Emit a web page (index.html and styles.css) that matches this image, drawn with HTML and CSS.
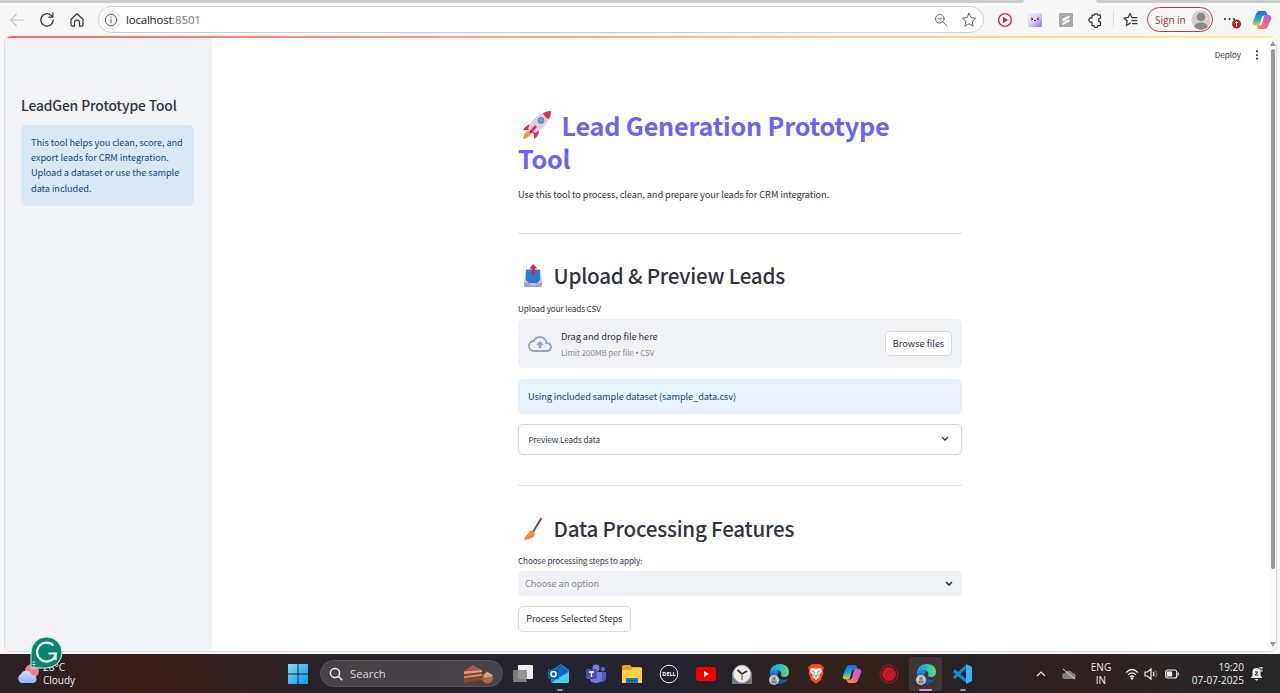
FILE: index.html
```html
<!DOCTYPE html>
<html lang="en">
<head>
<meta charset="utf-8">
<title>LeadGen Prototype Tool</title>
<link rel="stylesheet" href="styles.css">
</head>
<body>
<svg class="defs" width="0" height="0" aria-hidden="true">
  <defs>
    <linearGradient id="edgeTop" x1="0" y1="0" x2="1" y2="0"><stop offset="0" stop-color="#1b9de2"/><stop offset=".55" stop-color="#28bfc9"/><stop offset="1" stop-color="#68dd60"/></linearGradient>
    <linearGradient id="edgeLow" x1="0" y1="0" x2="0" y2="1"><stop offset="0" stop-color="#1e8bdc"/><stop offset="1" stop-color="#0c4e9d"/></linearGradient>
    <linearGradient id="copA" x1="0" y1="0" x2="0" y2="1"><stop offset="0" stop-color="#1769e0"/><stop offset=".5" stop-color="#19a9cf"/><stop offset="1" stop-color="#e2cf35"/></linearGradient>
    <linearGradient id="copB" x1="1" y1="0" x2="0" y2="1"><stop offset="0" stop-color="#a95cf0"/><stop offset=".5" stop-color="#ef5f9b"/><stop offset="1" stop-color="#ff8a3a"/></linearGradient>
    <linearGradient id="win" x1="0" y1="0" x2="1" y2="1"><stop offset="0" stop-color="#84dcff"/><stop offset="1" stop-color="#0b94f0"/></linearGradient>
    <linearGradient id="cloudFill" x1="0" y1="0" x2="0" y2="1"><stop offset="0" stop-color="#cfe0ff"/><stop offset="1" stop-color="#8fb2f3"/></linearGradient>
    <linearGradient id="catFill" x1="0" y1="0" x2="1" y2="1"><stop offset="0" stop-color="#f4f0fc"/><stop offset=".5" stop-color="#d9cdf6"/><stop offset="1" stop-color="#9a70e4"/></linearGradient>
    <symbol id="edge" viewBox="0 0 22 22">
      <path d="M2 12C1 4 7 1 12 1c6 0 9 4 9 8 0 3-2 5-5 5-2 0-3-1-3-2 1-1 0-5-4-5-3 0-6 2-7 5z" fill="url(#edgeTop)"/>
      <path d="M2 12c0-3 3-5 6-5 2 0 3 1 3 2-3 2-2 8 5 8 2 0 3-1 4-1-2 3-5 5-9 5-5 0-9-4-9-9z" fill="url(#edgeLow)"/>
      <circle cx="6" cy="17" r="5" fill="#c9c9c9"/><circle cx="6" cy="15.5" r="1.8" fill="#85807e"/><path d="M3 19.6c0-3 6-3 6 0-1.500 1.600-4.500 1.600-6 0z" fill="#85807e"/>
    </symbol>
    <symbol id="copilot" viewBox="0 0 20 20">
      <path d="M4.500 3Q5.300 1 7.300 1h5.200c1.300 0 1.900.8 2.300 2l.7 2.500h-3c-1.600 0-2.300.8-2.700 2.100l-1.700 5.900c-.5 1.500-1.500 2.200-3 2.200C1.200 15.700.3 13.800 1 11.500z" fill="url(#copA)"/>
      <path d="M15.500 17q-.8 2-2.800 2H7.500c-1.300 0-1.900-.8-2.300-2l-.5-1.500h2.700c1.600 0 2.300-.8 2.700-2.100l1.700-6.400c.5-1.500 1.500-2.200 3-2.200 3.900 0 5.100 1.800 4.400 4.200z" fill="url(#copB)"/>
    </symbol>
  </defs>
</svg>

<div class="screen">
  <header class="toolbar">
    <div class="tabline"><span class="active-tab"></span></div>
    <nav class="nav-buttons">
      <svg class="ico back" width="16" height="16" viewBox="0 0 16 16"><path d="M15 8H1.500M7.500 2 1.500 8l6 6"/></svg>
      <svg class="ico" width="16" height="16" viewBox="0 0 16 16"><path d="M14.200 8A6.200 6.200 0 1 1 12 3.200l1.600 1.500M13.900 1v4H9.900"/></svg>
      <svg class="ico" width="16" height="16" viewBox="0 0 16 16"><path d="M2 7.200 8 1.800l6 5.400v5.600q0 1.200-1.200 1.200H10.500V10.500a2.500 2.500 0 0 0-5 0V14H3.200Q2 14 2 12.800z"/></svg>
    </nav>
    <div class="address">
      <span class="site-info"><svg class="ico thin" width="14" height="14" viewBox="0 0 14 14"><circle cx="7" cy="7" r="5.700"/><path d="M7 6.300v3.500M7 4v.5"/></svg></span>
      <span class="url">localhost<i>:8501</i></span>
      <svg class="ico thin zoom-icon" width="14" height="14" viewBox="0 0 14 14"><circle cx="5.800" cy="5.800" r="4.300"/><path d="m9 9 4 4M3.800 5.800h4"/></svg>
      <svg class="ico thin" width="16" height="16" viewBox="0 0 16 16"><path d="m8 1.300 2 4.300 4.700.6-3.500 3.200.9 4.700L8 11.800l-4.100 2.300.9-4.700L1.300 6.200 6 5.600z"/></svg>
    </div>
    <div class="extensions">
      <svg width="16" height="16" viewBox="0 0 16 16"><circle cx="8" cy="8" r="6.400" fill="none" stroke="#c8264e" stroke-width="1.400"/><path d="M6 4.800 11 8l-5 3.200z" fill="#c8264e"/></svg>
      <svg width="14" height="14" viewBox="0 0 14 14"><rect width="14" height="14" rx="1" fill="url(#catFill)"/><path d="m3 4.500 2 1.500-2 1M11 4.500 9 6l2 1M6 7.500h2" fill="none" stroke="#423858"/></svg>
      <svg width="14" height="14" viewBox="0 0 14 14"><rect width="14" height="14" rx="1" fill="#a9a9a9"/><path d="M10.500 2.500v2.300L6 7.200l4.500-.7v2.200l-7 3.300V9.700l4.300-2.200-4.300.5V5.600z" fill="#fff"/></svg>
      <svg class="ico dark" width="16" height="16" viewBox="0 0 16 16"><path d="M4 3h2.200a2 2 0 0 1 3.800 0h2.500v3a2 2 0 1 0 0 4v3.500H10a2 2 0 0 1-4 0H4V10a2.200 2.200 0 1 1 0-4z"/></svg>
      <span class="divider"></span>
      <svg class="ico dark" width="16" height="16" viewBox="0 0 16 16"><path d="M8.500 11 4.300 13.500l.9-4.500L2 6l4.200-.6L8 1.500 9.900 5.500H15M10 8.500h5M10.500 11.500H15"/></svg>
    </div>
    <div class="signin"><span>Sign in</span><svg width="20" height="20" viewBox="0 0 20 20"><circle cx="10" cy="10" r="9.700" fill="#d2d0ce"/><circle cx="10" cy="7" r="4.300" fill="#8b8988"/><path d="M3.500 17c0-6 13-6 13 0-3.500 3.500-9.500 3.500-13 0z" fill="#8b8988"/></svg></div>
    <svg class="more" width="20" height="18" viewBox="0 0 20 18"><g fill="#333"><circle cx="3" cy="6" r="1.100"/><circle cx="7.500" cy="6" r="1.100"/><circle cx="12" cy="6" r="1.100"/></g><circle cx="14.500" cy="11" r="4.500" fill="#b9221f"/><path d="M14.500 13.500V9m-1.700 1.300 1.700-1.600 1.700 1.600" stroke="#fff" fill="none"/></svg>
    <svg class="cop" width="20" height="20"><use href="#copilot"/></svg>
  </header>

  <div class="viewport">
    <div class="rainbow"></div>
    <aside class="sidebar">
      <h2>LeadGen Prototype Tool</h2>
      <div class="note"><span>This tool helps you clean, score, and</span><br><span>export leads for CRM integration.</span><br><span>Upload a dataset or use the sample</span><br><span>data included.</span></div>
    </aside>
    <main class="main">
      <div class="app-menu"><span>Deploy</span><svg width="4" height="10" viewBox="0 0 4 10"><g fill="#31333f"><circle cx="2" cy="1.300" r="1.100"/><circle cx="2" cy="5" r="1.100"/><circle cx="2" cy="8.700" r="1.100"/></g></svg></div>
      <div class="content">
        <h1><svg class="rocket" width="30" height="28" viewBox="0 0 30 28"><path d="m9 13q-5 1-8 6l6 0 5 4 0 5q5-3 5-9z" fill="#e22b59"/><path d="M7 20q-5 0-6 8 7-1 8-6z" fill="#f69939"/><path d="M6 18Q10 4 28 0q1 13-15 22z" fill="#d9cfdd"/><path d="M21 2q4-2 8-2 0 5-2 8-4-1-6-6z" fill="#e32c4c"/><path d="m14 15-6 7" stroke="#dc214f" stroke-width="2.500"/><circle cx="19" cy="9.500" r="3" fill="#56a3e8" stroke="#7b80a8"/></svg><span>Lead Generation Prototype</span><br><span>Tool</span></h1>
        <p class="intro"><span>Use this tool to process, clean, and prepare your leads for CRM integration.</span></p>
        <hr>
        <h2 class="upload-title"><svg width="20" height="24" viewBox="0 0 20 24"><path d="M3 5h14l2 13v3q0 2-2 2H3q-2 0-2-2v-3z" fill="#c8bddb"/><path d="M3 6h14v10l-3 3H6l-3-3z" fill="#247fd0"/><path d="M1 19h5l1.500 2h5L14 19h5v2q0 2-2 2H3q-2 0-2-2z" fill="#aa9fc4"/><path d="m10.300 0 4 4.500H12V11H8.500V4.500H6.300z" fill="#d02552"/></svg><span>Upload &amp; Preview Leads</span></h2>
        <label class="upload-label"><span>Upload your leads CSV</span></label>
        <section class="dropzone">
          <svg width="24" height="24" viewBox="0 0 24 24"><path d="M19.350 10.040A7.490 7.490 0 0 0 12 4C9.110 4 6.600 5.640 5.350 8.040A5.994 5.994 0 0 0 0 14c0 3.310 2.690 6 6 6h13c2.760 0 5-2.240 5-5 0-2.640-2.050-4.780-4.650-4.960zM19 18H6a4 4 0 0 1-.57-7.960l1.070-.11.500-.95A5.470 5.470 0 0 1 12 6c2.620 0 4.880 1.860 5.390 4.430l.3 1.500 1.530.11A2.960 2.960 0 0 1 22 15c0 1.650-1.350 3-3 3zm-11-5h2.550v3h2.900v-3H16l-4-4z" fill="#98a4c5"/></svg>
          <div class="drop-copy"><b><span>Drag and drop file here</span></b><small><span>Limit 200MB per file <i>•</i> CSV</span></small></div>
          <button class="button browse"><span>Browse files</span></button>
        </section>
        <div class="info"><span>Using included sample dataset (sample_data.csv)</span></div>
        <div class="expander"><span>Preview Leads data</span><svg class="chev" width="8" height="6" viewBox="0 0 8 6"><path d="m1 1 3 3 3-3"/></svg></div>
        <hr class="second">
        <h2 class="process-title"><svg width="20" height="24" viewBox="0 0 20 24"><path d="M18.500 1 10 15" stroke="#77485a" stroke-width="2"/><path d="m8 13 4 3q0 6-11 7 1-4 3-5z" fill="#f58a47"/><path d="m4 18 3 3m0-5 3 4" stroke="#e87440"/></svg><span>Data Processing Features</span></h2>
        <label class="steps-label"><span>Choose processing steps to apply:</span></label>
        <div class="select"><span>Choose an option</span><svg class="chev heavy" width="8" height="6" viewBox="0 0 8 6"><path d="m1 1 3 3 3-3"/></svg></div>
        <button class="button process"><span>Process Selected Steps</span></button>
      </div>
    </main>
    <div class="scrollbar"><i class="up"></i><i class="thumb"></i><i class="down"></i></div>
  </div>

  <footer class="taskbar">
    <div class="weather"><svg width="24" height="22" viewBox="0 0 24 22"><circle cx="16" cy="8" r="7" fill="#ee7c89"/><path d="M5 20a5 5 0 0 1 0-9 6 6 0 0 1 11 1 4 4 0 0 1 1 8z" fill="url(#cloudFill)"/></svg><div><span>28°C</span><span>Cloudy</span></div></div>
    <svg class="windows" width="20" height="20" viewBox="0 0 20 20"><path d="M0 0h9.500v9.500H0zM10.500 0H20v9.500h-9.500zM0 10.500h9.500V20H0zM10.500 10.500H20V20h-9.500z" fill="url(#win)"/></svg>
    <div class="search"><svg width="14" height="14" viewBox="0 0 14 14"><g fill="none" stroke="#eee" stroke-width="1.500"><circle cx="6" cy="6" r="4.600"/><path d="m9.300 9.300 4 4"/></g></svg><span>Search</span><svg class="cake" width="32" height="20" viewBox="0 0 32 20"><path d="m1 7 18-1v10L1 19z" fill="#8a4630"/><path d="m1 7 9-6 9 5z" fill="#a45b3e"/><path d="m1 7.500 18-1.500v2L1 10zm0 5 18-2.500v1.500L1 14z" fill="#dba184"/><circle cx="24.500" cy="14" r="5.500" fill="#ad6745"/><path d="m20 12 4-4.500 6 4-3 2-2-1-2 2z" fill="#d3a17b"/></svg></div>
    <div class="apps">
      <span><svg width="20" height="18" viewBox="0 0 20 18"><rect x="5" width="15" height="14" rx="1" fill="#eee"/><path d="M0 5h14v12H0z" fill="#8a8a8a" opacity=".88"/></svg></span>
      <span class="running"><svg width="22" height="20" viewBox="0 0 22 20"><path d="m3 6 10-6 8 6v11q0 2-2 2H5q-2 0-2-2z" fill="#1684d6"/><path d="m5 5 8-4 7 6-8 5z" fill="#1168b8"/><path d="m4 18 17-10v9q0 2-2 2H5z" fill="#48d0f5"/><rect y="5" width="11" height="10" rx="1" fill="#0b5cab"/><circle cx="5.500" cy="10" r="2.600" fill="none" stroke="#fff" stroke-width="1.500"/></svg></span>
      <span><svg width="22" height="20" viewBox="0 0 22 20"><circle cx="11" cy="4" r="3.500" fill="#7c80e3"/><circle cx="18" cy="5" r="2.300" fill="#5059c9"/><path d="M13 8h8v5q0 5-5 5h-3z" fill="#5059c9"/><path d="M5 8h12v6q0 5-6 5t-6-5z" fill="#7479dc"/><rect x="1" y="5" width="11" height="10" rx="1" fill="#4850ae"/><path d="M4 8h5M6.500 8v5" stroke="#fff" stroke-width="1.300"/></svg></span>
      <span><svg width="20" height="18" viewBox="0 0 20 18"><path d="M0 2q0-2 2-2h6l2 2h9l1 2v14H0z" fill="#e3a51c"/><path d="M0 5h9l2-2h9v15H0z" fill="#ffcf48"/><path d="M4 18v-5h12v5z" fill="#177ac1"/><path d="M6 15.500h8" stroke="#075086"/></svg></span>
      <span><svg width="20" height="20" viewBox="0 0 20 20"><circle cx="10" cy="10" r="8.800" fill="none" stroke="#eee"/><text x="10" y="12" text-anchor="middle" class="dell">DELL</text></svg></span>
      <span><svg width="20" height="14" viewBox="0 0 20 14"><rect width="20" height="14" rx="3" fill="#f20000"/><path d="m8 4 5 3-5 3z" fill="#fff"/></svg></span>
      <span><svg width="20" height="20" viewBox="0 0 20 20"><path d="M0 8h20v12H0z" fill="#6d777d"/><circle cx="10" cy="10" r="8.800" fill="#e8eaeb" stroke="#a5abae"/><path d="m5.500 6 4.500 4 5-3" fill="none" stroke="#333" stroke-width="1.800"/><path d="M10 10v6" stroke="#d6672d" stroke-width="1.600"/></svg></span>
      <span><svg width="22" height="22"><use href="#edge"/></svg></span>
      <span><svg width="18" height="20" viewBox="0 0 18 20"><path d="m5 0h8l2 2 2 1-1 3 .5 3L14 16l-5 4-5-4L1.500 9 2 6 1 3l2-1z" fill="#f24a22"/><path d="m4 4 3 .5h4l3-.5 1 4-3 3 .5 2L9 16l-3.500-3 .5-2-3-3z" fill="#fff"/><path d="m5 7 2.500 1-.8 2.500 1.300 1h2l1.300-1L10.500 8 13 7M9 12v2" fill="none" stroke="#f24a22" stroke-width=".8"/></svg></span>
      <span><svg width="20" height="20"><use href="#copilot"/></svg></span>
      <span><svg width="20" height="20" viewBox="0 0 20 20"><circle cx="10" cy="10" r="9" fill="none" stroke="#a91d26"/><circle cx="10" cy="10" r="7" fill="#c91422"/></svg></span>
      <span class="current"><svg width="22" height="22"><use href="#edge"/></svg></span>
      <span class="running"><svg width="20" height="20" viewBox="0 0 20 20"><path d="M14 2.500 2 14M2 6.500 14 17" stroke="#168bd2" stroke-width="3"/><path d="m14 0 6 3v14l-6 3z" fill="#35b5f4"/></svg></span>
    </div>
    <div class="tray">
      <svg class="caret" width="10" height="6" viewBox="0 0 10 6"><path d="m1 5 4-4 4 4"/></svg>
      <svg class="cloud" width="14" height="12" viewBox="0 0 14 12"><path d="M3 11a3 3 0 0 1 0-6 4 4 0 0 1 7.500 0A3 3 0 0 1 11 11z" fill="#858181"/><path d="m1 1 12 10" stroke="#ddd"/></svg>
      <div class="lang"><span>ENG</span><span>IN</span></div>
      <svg class="wifi" width="14" height="12" viewBox="0 0 14 12"><path d="M1 4.500q6-6 12 0M3 6.800q4-4 8 0M5 9q2-2 4 0"/><circle cx="7" cy="10.500" r="1.200" fill="#eee" stroke="none"/></svg>
      <svg class="sound" width="14" height="12" viewBox="0 0 14 12"><path d="M1 4h2.500L7 1v10L3.500 8H1z"/><path d="M9 4q2 2 0 4"/><path d="M11 2.500q3.500 3.500 0 7" opacity=".35"/></svg>
      <svg class="battery" width="14" height="10" viewBox="0 0 14 10"><rect x=".7" y="1" width="11" height="8" rx="2"/><path d="M2.500 3h4v4h-4z" fill="#eee"/><path d="M13.200 3.500v3"/></svg>
      <div class="clock"><span>19:20</span><span>07-07-2025</span></div>
      <svg class="bell" width="14" height="14" viewBox="0 0 14 14"><path d="M1 11 2.500 8V5a4 4 0 0 1 8 0v3l1.500 3zM4.500 12h4l-2 1.700z" fill="#eee"/><path d="M5 5h3L5 8h3" fill="none" stroke="#282626"/><path d="M9 .700h3.500L9.500 4h3.500" fill="none" stroke="#eee"/></svg>
    </div>
  </footer>
  <svg class="grammarly" width="34" height="34" viewBox="0 0 34 34"><path d="M1 32V16.500A15.500 15.500 0 1 1 16.500 32z" fill="#07866e" stroke="#e1eee9"/><path d="M23.500 9.500A9.500 9.500 0 1 0 26 17.500h-7.500M25.500 17.500v6.500" fill="none" stroke="#fff" stroke-width="2.200"/><path d="M2.500 26h3m-3 2.500h3m-3 2.500h3" stroke="#d6eee7"/></svg>
</div>
</body>
</html>
```
FILE: styles.css
```css
*{box-sizing:border-box}
body{margin:0;overflow:hidden;color:#31333f;font-family:"Noto Sans CJK SC",sans-serif}
.defs{position:absolute}
svg{flex:none;display:block}
span{white-space:nowrap}
.screen{position:relative;width:1280px;height:693px;display:flex;flex-direction:column;background:#f7f7f7}
.toolbar{position:relative;height:36px;flex:none;display:flex;align-items:center;padding-top:3px;font-family:"Noto Sans",sans-serif}
.tabline{position:absolute;top:0;left:0;width:100%;height:3px;background:#ccc}
.active-tab{display:block;width:74px;height:3px;margin-left:1023px;background:#f7f7f7;border-radius:4px 4px 0 0}
.nav-buttons{display:flex;gap:14px;padding-left:9px;width:98px}
.ico{fill:none;stroke:#333;stroke-width:1.25;stroke-linecap:round;stroke-linejoin:round}
.ico.back{stroke:#ccc}
.ico.thin{stroke:#666;stroke-width:1}
.address{width:886px;height:27px;border:1px solid #cecece;border-radius:14px;background:#fff;display:flex;align-items:center;padding:0 6px 0 2px}
.site-info{width:20px;height:20px;border-radius:50%;background:#f5f5f5;display:flex;align-items:center;justify-content:center}
.url{font:11.6px "Open Sans",sans-serif;letter-spacing:-.25px;color:#222;margin-left:5px;flex:1}
.url i{font-style:normal;color:#777}
.zoom-icon{margin-right:13px}
.extensions{display:flex;align-items:center;margin-left:13px;width:150px}
.extensions>:nth-child(2){margin-left:15px}
.extensions>:nth-child(3){margin-left:17px}
.extensions>:nth-child(4){margin-left:15px}
.extensions>:nth-child(5){margin-left:9px}
.extensions>:nth-child(6){margin-left:8px}
.divider{width:1px;height:17px;background:#ddd}
.signin{width:66px;height:25px;border:1px solid #b33b46;border-radius:13px;display:flex;align-items:center;justify-content:space-between;padding:0 1px 0 7px;color:#a4343f;font:10.2px "Open Sans",sans-serif;letter-spacing:-.1px}
.more{margin:5px 0 0 9px}
.cop{margin-left:10px}
.viewport{position:relative;flex:none;width:1273px;height:616px;margin-left:4px;border:1px solid #ddd;border-top:0;border-radius:7px;overflow:hidden;display:flex;background:#fff}
.rainbow{position:absolute;left:0;top:0;width:100%;height:2px;background:linear-gradient(90deg,#ee6a65,#ff9c82 35%,#ffc98a 62%,#fff08a)}
.sidebar{width:207px;background:#f0f2f6;padding:59px 18px 0 16px}
.sidebar h2{font-size:13.8px;letter-spacing:-.1px;line-height:20px;font-weight:500;margin:0 0 10px}
.note{height:81px;background:#dae7f5;border-radius:5px;padding:9.5px 10px 0;color:#124a82;font-size:9.2px;letter-spacing:-.06px;line-height:15.4px}
.main{position:relative;flex:1}
.app-menu{position:absolute;right:10px;top:13px;display:flex;align-items:center;gap:14px;font-size:8.1px;letter-spacing:-.05px;line-height:12px}
.content{width:444px;margin-left:306px;padding-top:73px}
h1,.content h2{margin:0;display:block}
h1{height:66px;font-size:25.2px;letter-spacing:-.2px;line-height:33px;font-weight:700;color:#6c63f0}
h1 svg{display:inline-block;margin:0 10px 0 3.5px;vertical-align:-3px}
.intro{font-size:9.25px;letter-spacing:-.1px;line-height:16px;margin:11px 0 31px}
hr{margin:0;height:1px;border:0;background:#e3e3e6}
.content h2{display:flex;align-items:center;gap:10.5px;padding-left:5px;font-size:20.6px;letter-spacing:-.22px;font-weight:500;line-height:28px}
.content .upload-title{padding-top:27px}
.content .process-title{padding-top:28px}
.upload-title svg{margin-top:2px}
.process-title svg{margin-top:2px}
label{display:block;font-size:8.15px;letter-spacing:-.1px;line-height:12px}
.upload-label{margin:14px 0 4px}
.steps-label{margin:13px 0 4px}
.dropzone{height:49px;display:flex;align-items:center;background:#f0f2f6;border-radius:5px;padding:0 10px}
.drop-copy{display:flex;flex-direction:column;margin-left:9px;flex:1}
.drop-copy b{font-weight:400;font-size:9.25px;letter-spacing:-.07px;line-height:17px}
.drop-copy small{font-size:8.15px;letter-spacing:-.1px;line-height:15px;color:#8b8e98}
.drop-copy i{font:8px/1 "Noto Sans",sans-serif}
.button{border:1px solid #d9dade;border-radius:5px;background:#fff;padding:0 0 2px;color:#31333f;font:9.25px/14px "Noto Sans CJK SC",sans-serif}
.browse{width:67px;height:25px}
.info{height:35px;margin-top:11px;padding:9px 10px;background:#e8f2fc;color:#124a7c;border-radius:5px;font-size:9.25px;letter-spacing:-.1px;line-height:16px}
.expander{height:31px;margin-top:10px;border:1px solid #d5d6da;border-radius:5px;padding:0 12px 1px 9.5px;display:flex;justify-content:space-between;align-items:center;font-size:8.15px;letter-spacing:-.08px}
.chev{fill:none;stroke:#31333f;stroke-width:1.3}
.heavy{stroke-width:1.7;margin-top:1px}
.second{margin-top:30px}
.select{height:25px;background:#f0f2f6;border-radius:5px;display:flex;justify-content:space-between;align-items:center;padding:0 9px 1px 7px;color:#858893;font-size:9.25px;line-height:14px;letter-spacing:-.1px}
.process{width:112.5px;height:26px;margin-top:10px;display:block;letter-spacing:-.1px}
.scrollbar{width:7px;margin-top:3px;background:#fafafa;display:flex;flex-direction:column;align-items:center}
.up,.down{border:3px solid transparent;height:0}
.up{border-bottom:5px solid #999;border-top:0;margin-top:2px}
.thumb{width:4px;height:520px;border-radius:3px;background:#999;margin-top:3px}
.down{border-top:5px solid #999;border-bottom:0;margin-top:73px}
.taskbar{height:39px;margin-top:auto;display:flex;align-items:center;background:linear-gradient(90deg,#292225,#391d19 10%,#351e1b 15%,#292329 24%,#232331 48%,#24222a 55%,#352019 67%,#252226 76%,#30201f 84%,#2a2425 91%,#262728);color:#f0f0f0;font-family:"Open Sans",sans-serif;font-size:10px}
.weather{width:288px;padding-left:16px;display:flex;align-items:center;gap:3px;line-height:13px}
.weather div{display:flex;flex-direction:column}
.search{width:183px;height:27px;margin-left:12px;border:1px solid #555;border-radius:14px;background:linear-gradient(90deg,#484247,#474148);display:flex;align-items:center;padding:0 7px 0 8px;font-size:11.3px;gap:7px;color:#ddd}
.cake{margin-left:auto}
.apps{display:flex;margin-left:3px}
.apps>span{position:relative;width:33px;height:34px;display:flex;align-items:center;justify-content:center;margin-right:3.65px}
.running:after,.current:after{content:"";position:absolute;bottom:0;left:14px;width:6px;height:2px;border-radius:2px;background:#999}
.current{background:#413437;border-radius:3px}
.current:after{left:10px;width:13px;background:#d295df}
.dell{font:700 5.5px "Open Sans",sans-serif;fill:#fff}
.tray{flex:1;height:38px;display:flex;align-items:center;justify-content:flex-end;padding-right:16px}
.caret,.wifi,.sound,.battery{fill:none;stroke:#eee;stroke-width:1.2}
.cloud{margin-left:16px}
.lang{width:34px;margin-left:8px;display:flex;flex-direction:column;align-items:center;line-height:13px;margin-right:7px}
.sound{margin-left:5px}
.battery{margin-left:7px}
.clock{width:65px;display:flex;flex-direction:column;align-items:flex-end;line-height:13px}
.bell{margin-left:6px}
.grammarly{position:absolute;left:30px;top:636px}
```
